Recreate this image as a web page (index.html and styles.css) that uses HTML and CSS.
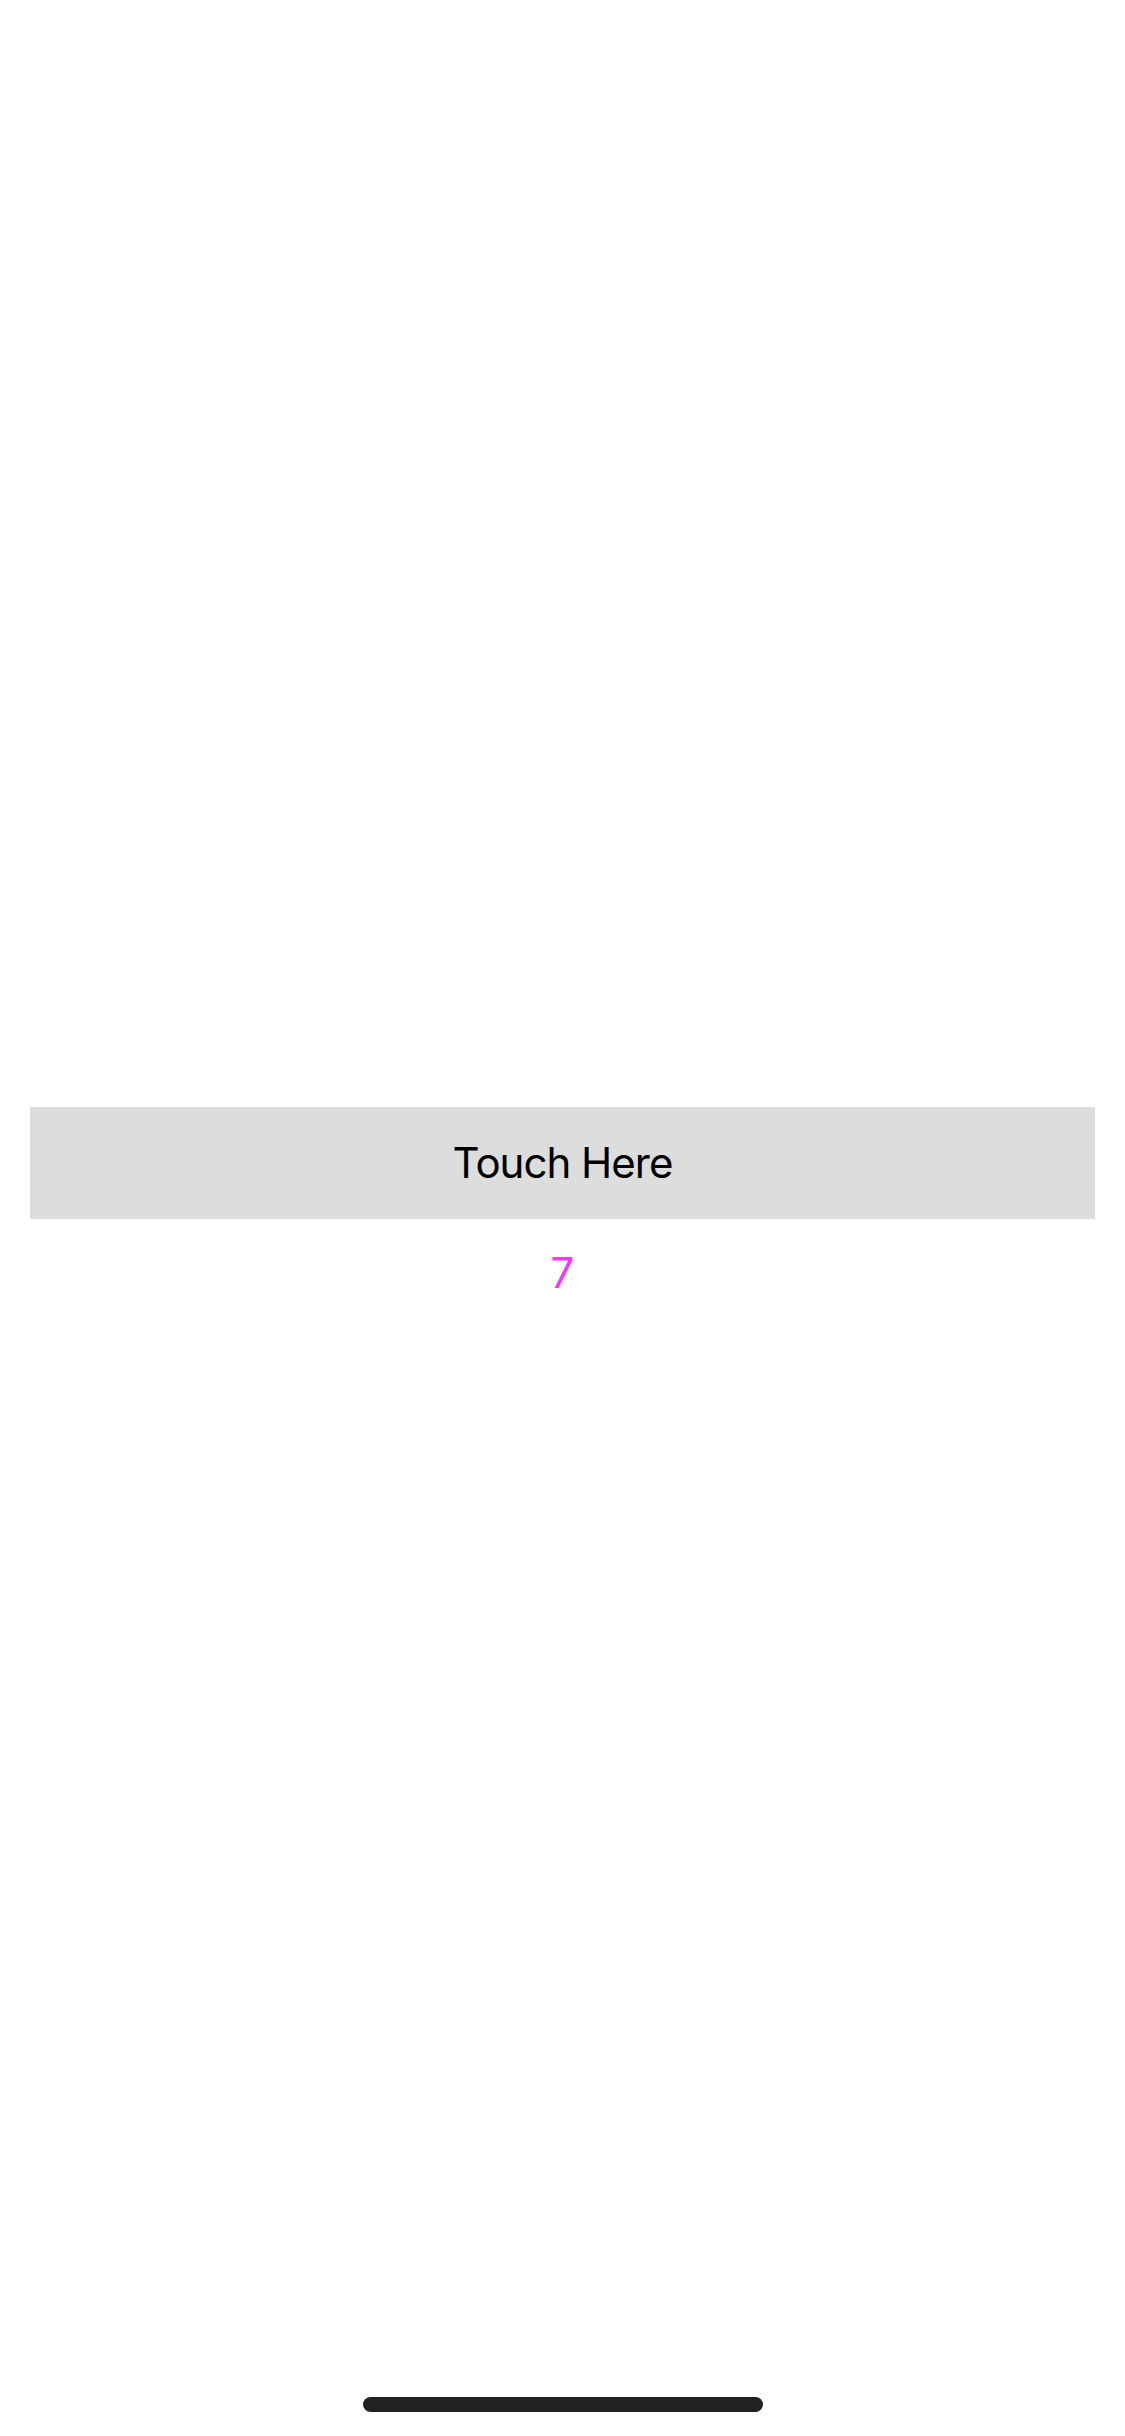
FILE: index.html
```html
<!DOCTYPE html>
<html lang="en">
<head>
<meta charset="utf-8">
<title>Touch Here</title>
<link rel="stylesheet" href="styles.css">
</head>
<body>
<main class="screen">
  <div class="content">
    <button class="touch-button" type="button">Touch Here</button>
    <div class="counter">7</div>
  </div>
  <div class="home-indicator"></div>
</main>
</body>
</html>
```

FILE: styles.css
```css
html, body {
  margin: 0;
  padding: 0;
  background: #ffffff;
}

.screen {
  position: relative;
  width: 1125px;
  height: 2436px;
  overflow: hidden;
  font-family: Inter, "Liberation Sans", Arial, sans-serif;
}

.content {
  display: flex;
  flex-direction: column;
  align-items: stretch;
  padding: 1107px 30px 0 30px;
}

.touch-button {
  display: flex;
  align-items: center;
  justify-content: center;
  height: 112px;
  margin: 0;
  padding: 0;
  border: none;
  border-radius: 0;
  background: #dddddd;
  color: #000000;
  font-family: Inter, "Liberation Sans", Arial, sans-serif;
  font-size: 42px;
  line-height: 48px;
  letter-spacing: -1px;
}

.counter {
  margin-top: 30px;
  text-align: center;
  color: #ec3df5;
  font-size: 42px;
  line-height: 48px;
}

.home-indicator {
  position: absolute;
  left: 50%;
  bottom: 24px;
  width: 400px;
  height: 15px;
  margin-left: -200px;
  border-radius: 8px;
  background: #222222;
}
```
